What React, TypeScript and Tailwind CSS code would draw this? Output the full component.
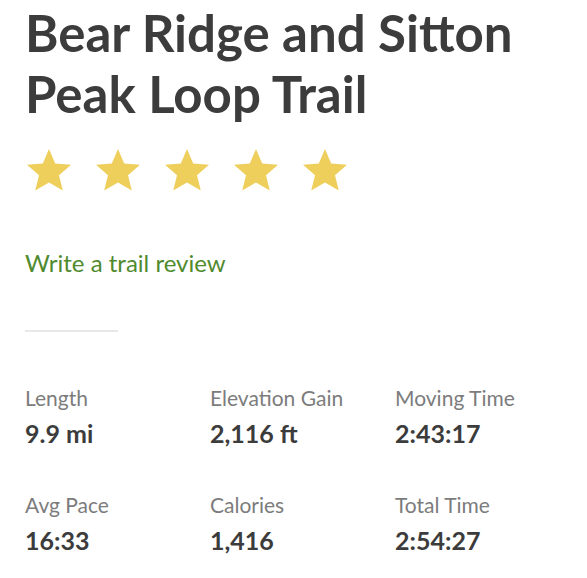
import React from "react";

const stats = [
  { label: "Length", value: "9.9 mi" },
  { label: "Elevation Gain", value: "2,116 ft" },
  { label: "Moving Time", value: "2:43:17" },
  { label: "Avg Pace", value: "16:33" },
  { label: "Calories", value: "1,416" },
  { label: "Total Time", value: "2:54:27" },
];

function Star() {
  return (
    <svg width="48" height="46" viewBox="0 0 24 23">
      <path
        d="M12 0.5l3.1 7.3 7.9 0.6-6 5.2 1.9 7.7L12 17.2l-6.9 4.1 1.9-7.7-6-5.2 7.9-0.6z"
        fill="#eecf5c"
      />
    </svg>
  );
}

export default function App() {
  return (
    <div
      className="min-h-screen bg-white px-[25px] pt-[2px]"
      style={{ fontFamily: "Lato, 'Noto Sans', sans-serif" }}
    >
      {/* Title */}
      <h1 className="text-[51px] font-bold leading-[61px] text-[#3c3c3c]">
        Bear Ridge and Sitton Peak Loop Trail
      </h1>

      {/* Rating */}
      <div className="mt-[24px] flex gap-[21px]">
        {[0, 1, 2, 3, 4].map((i) => (
          <Star key={i} />
        ))}
      </div>

      <div className="mt-[54px] text-[24px] leading-[30px] text-[#508a2e]">
        Write a trail review
      </div>

      <div className="mt-[52px] h-[2px] w-[93px] bg-[#e8e8e8]" />

      {/* Stats */}
      <div className="mt-[54px] grid grid-cols-[185px_185px_185px] gap-y-[45px]">
        {stats.map((s) => (
          <div key={s.label}>
            <div className="text-[21px] leading-[24px] text-[#7c7c7c]">
              {s.label}
            </div>
            <div className="mt-[8px] text-[25px] font-bold leading-[30px] text-[#3c3c3c]">
              {s.value}
            </div>
          </div>
        ))}
      </div>
    </div>
  );
}
